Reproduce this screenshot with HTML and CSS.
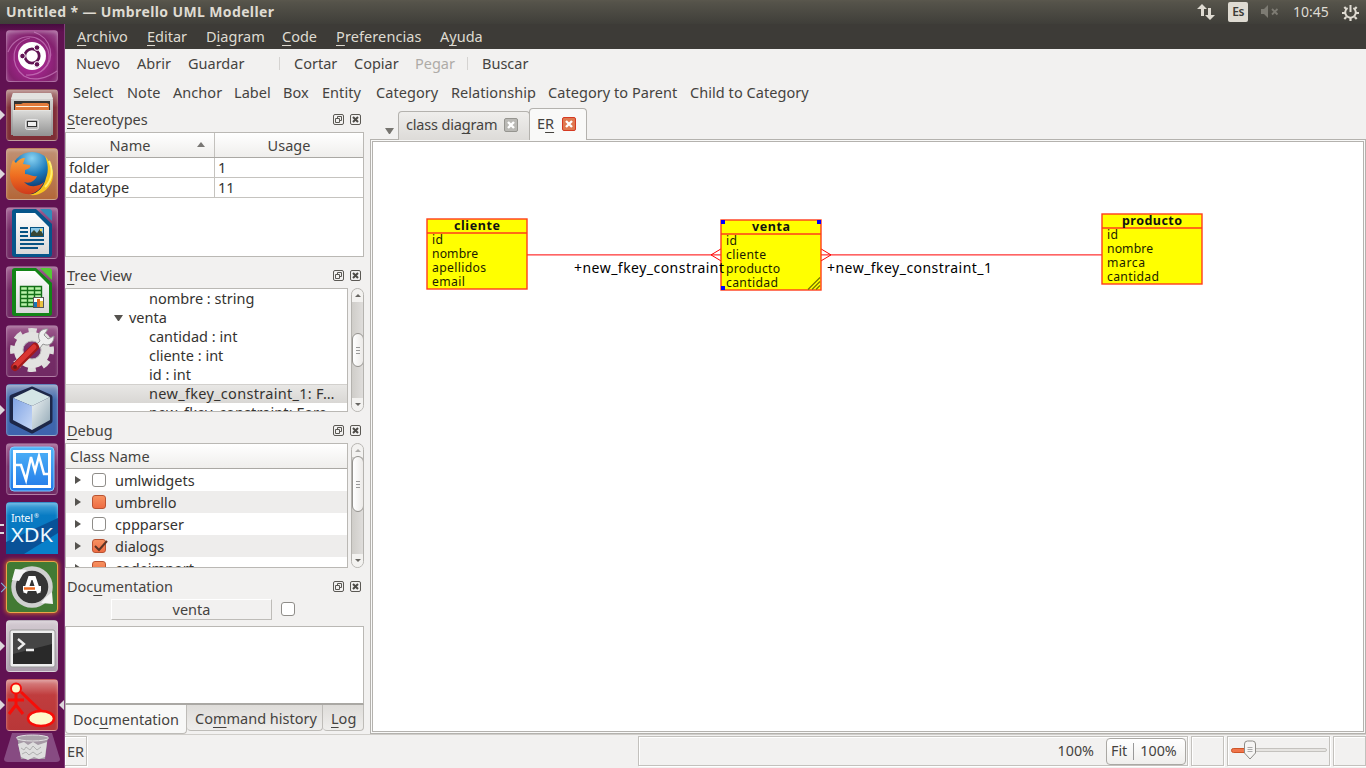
FILE: index.html
```html
<!DOCTYPE html>
<html lang="es">
<head>
<meta charset="utf-8">
<title>Untitled * — Umbrello UML Modeller</title>
<link rel="stylesheet" href="styles.css">
</head>
<body>
<svg class="defs" width="0" height="0">
  <defs>
    <linearGradient id="metal" x1="0" y1="0" x2="0" y2="1"><stop offset="0" stop-color="#dcdcda"/><stop offset="1" stop-color="#929292"/></linearGradient>
    <linearGradient id="page" x1="0" y1="0" x2="0" y2="1"><stop offset="0" stop-color="#fff"/><stop offset="1" stop-color="#d8d8d8"/></linearGradient>
    <radialGradient id="globe" cx=".5" cy=".15" r=".8"><stop offset="0" stop-color="#88d2f2"/><stop offset=".5" stop-color="#1b79ba"/><stop offset="1" stop-color="#0b2758"/></radialGradient>
    <linearGradient id="fox" x1="0" y1="0" x2="0" y2="1"><stop offset="0" stop-color="#f7a13c"/><stop offset=".5" stop-color="#ee6c20"/><stop offset="1" stop-color="#cf3b1b"/></linearGradient>
    <linearGradient id="vm" x1="0" y1="0" x2="0" y2="1"><stop offset="0" stop-color="#4fb4f8"/><stop offset="1" stop-color="#2178e8"/></linearGradient>
    <linearGradient id="cubeL" x1="0" y1="0" x2="1" y2="1"><stop offset="0" stop-color="#7fa3e4"/><stop offset="1" stop-color="#c9d9f6"/></linearGradient>
    <linearGradient id="cubeR" x1="0" y1="0" x2="1" y2="1"><stop offset="0" stop-color="#f0f4f4"/><stop offset="1" stop-color="#90a7b5"/></linearGradient>
    <symbol id="float" viewBox="0 0 11 11"><rect x=".5" y=".5" width="10" height="10" rx="1.5" fill="none" stroke="#5b5954"/><path d="M4.500 4.500V2.500h4v4h-2M2.500 4.500h4v4h-4z" fill="none" stroke="#5b5954"/></symbol>
    <symbol id="close" viewBox="0 0 11 11"><rect x=".5" y=".5" width="10" height="10" rx="1.5" fill="none" stroke="#5b5954"/><path d="M3 3l5 5M8 3L3 8" stroke="#4d4b47" stroke-width="2"/></symbol>
  </defs>
</svg>
<header class="panel">
  <span class="wintitle">Untitled * — Umbrello UML Modeller</span>
  <div class="tray">
    <svg width="18" height="18" viewBox="0 0 18 18" fill="#dfdbd2"><path d="M5 1l5 5H7v7H4V6H0zM11 5h3v7h4l-5 5-5-5h3z"/></svg>
    <span class="lang">Es</span>
    <svg width="18" height="14" viewBox="0 0 18 14" fill="#7d7b73"><path d="M0 4h3l4-4v13L3 9H0z"/><path d="M11 4l5.500 5.500M16.500 4L11 9.500" stroke="#7d7b73" stroke-width="1.800"/></svg>
    <span class="clock">10:45</span>
    <svg width="17" height="17" viewBox="0 0 17 17" fill="none" stroke="#dfdbd2"><path d="M5.600 4A5.300 5.300 0 1 0 11.400 4" stroke-width="2"/><path d="M8.500 1v7" stroke-width="2"/><path d="M8.500 14v3M0 9h3M14 9h3M2.300 3l2 2M14.700 3l-2 2M2.300 15l2-2M14.700 15l-2-2" stroke-width="2.200"/></svg>
  </div>
</header>
<div class="desktop">
  <nav class="launcher">
    <div class="tile dash"><svg viewBox="0 0 52 52"><g fill="none" stroke="#d58fcb" stroke-width="1.200" opacity=".6"><path d="M2 22C10 2 35 2 42 20c5 15-7 26-22 25"/><path d="M24 8C5 12 3 34 18 46c10 6 23 2 33-5"/><path d="M28 2c18 6 22 27 9 38"/></g><circle cx="26" cy="26" r="14" fill="#fff"/><circle cx="26" cy="26" r="7.200" fill="none" stroke="#611353" stroke-width="2.800"/><g fill="#611353" stroke="#fff" stroke-width="1"><circle cx="16.500" cy="26" r="2.800"/><circle cx="31" cy="17.600" r="2.800"/><circle cx="31" cy="34.400" r="2.800"/></g></svg></div>
    <div class="tile files run"><svg viewBox="0 0 52 52"><path d="M7 4h38l2 7v35H5V11z" fill="url(#metal)"/><path d="M5 10h42l-2-6H7z" fill="#e2e2e0"/><path d="M8 12h36v10H8z" fill="#343331"/><path d="M9 15h6l2-1h24l2 1v6H9z" fill="#e27b3b"/><path d="M10 17.500h32" stroke="#fff2df"/><path d="M7 21h38v26H7z" fill="url(#metal)"/><path d="M7 21.500h38" stroke="#e4e4e2"/><rect x="19.500" y="30.500" width="13" height="10" rx="2" fill="#bbb" stroke="#e6e6e6"/><rect x="21.500" y="32.500" width="9" height="5" fill="#efefef" stroke="#333"/></svg></div>
    <div class="tile firefox run"><svg viewBox="0 0 52 52"><circle cx="26" cy="25" r="21" fill="url(#globe)"/><path d="M39 8c7 7 10 17 7 25-4 10-13 15-22 14 8-2 14-8 16-17 3-7 2-15-1-22z" fill="#f8c51e"/><path d="M43 13c4 8 4 18-4 26" fill="none" stroke="#fff071" stroke-width="2"/><path d="M7 12l3 3c2-3 5-5 9-5l-2 6 7 1c1 2-1 4-5 5v4c4 0 7 3 12 2-2 5-7 8-13 6 5 6 15 5 20 0-4 9-11 13-18 12C11 45 4 37 4 27c0-6 1-10 3-15z" fill="url(#fox)"/></svg></div>
    <div class="tile plain"><svg viewBox="0 0 52 52"><path d="M9 2h21l16 15v30q0 3-3 3H9q-3 0-3-3V5q0-3 3-3z" fill="#06558a"/><path d="M34 2h9q3 0 3 3v9z" fill="#318cb9"/><path d="M10 6h19l14 14v27H10z" fill="url(#page)"/><path d="M14 21h8M14 25h8M14 29h8M14 33h24M14 37h24M14 41h18" stroke="#075383" stroke-width="2"/><rect x="24.500" y="20.500" width="13" height="9" fill="#8cc8e7" stroke="#075383"/><path d="M25 29v-3l3-3 3 3 3-4 3 5v2z" fill="#384735"/><circle cx="35" cy="23" r="1.200" fill="#f7d64f"/></svg></div>
    <div class="tile plain"><svg viewBox="0 0 52 52"><path d="M9 2h21l16 15v30q0 3-3 3H9q-3 0-3-3V5q0-3 3-3z" fill="#138417"/><path d="M34 2h9q3 0 3 3v9z" fill="#55c936"/><path d="M10 5h19l14 14v28H10z" fill="url(#page)"/><path d="M14 20h22v21H14z" fill="#b8f2a9"/><path d="M14.500 20.500h21v20h-21zM14 24.500h22M14 28.500h22M14 32.500h22M14 36.500h22M21.500 20v21M28.500 20v21" stroke="#146f18" fill="none" stroke-width="1.400"/><rect x="27.500" y="31.500" width="10" height="10" fill="#fff" stroke="#555"/><path d="M28 36h3v5h-3z" fill="#1876b8"/><path d="M31 33h3v8h-3z" fill="#e06b1e"/><path d="M34 35h3v6h-3z" fill="#e8c341"/></svg></div>
    <div class="tile plain"><svg viewBox="0 0 52 52"><circle cx="26" cy="25" r="19" fill="none" stroke="#dededc" stroke-width="6" stroke-dasharray="8 6.920" stroke-dashoffset="4"/><circle cx="26" cy="25" r="13.500" fill="none" stroke="#e2e2e0" stroke-width="9"/><circle cx="26" cy="25" r="9" fill="none" stroke="#b5b1b4"/><path d="M30 20l4-4c-4-7 1-13 8-12l-4 6 4 4 6-3c0 7-5 11-11 8l-3 4z" fill="#eee" stroke="#969696"/><path d="M9 42L29 22" stroke="#a4191a" stroke-width="8" stroke-linecap="round"/><path d="M9 41L28 22" stroke="#d93632" stroke-width="5" stroke-linecap="round"/><circle cx="9" cy="42" r="2" fill="#681616"/></svg></div>
    <div class="tile cube run"><svg viewBox="0 0 52 52"><path d="M26 5l18 8v24L26 47 6 37V13z" fill="#1d2748" stroke="#1d2748" stroke-width="5" stroke-linejoin="round"/><path d="M26 5l18 8-18 9L7 14z" fill="#d4e5e6"/><path d="M7 14l19 8v24L7 36z" fill="url(#cubeL)"/><path d="M44 13l-18 9v24l18-10z" fill="url(#cubeR)"/></svg></div>
    <div class="tile plain"><svg viewBox="0 0 52 52"><rect x="4" y="4" width="44" height="44" rx="4" fill="url(#vm)" stroke="#81cbff"/><rect x="8.500" y="8.500" width="35" height="35" fill="none" stroke="#fff" stroke-width="3"/><path d="M10 22h5l5 15 5-23 4 14 4-15 5 18h4" fill="none" stroke="#fff" stroke-width="2.500"/></svg></div>
    <div class="tile xdk run2"><svg viewBox="0 0 52 52"><path d="M0 40L52 16v36H0z" fill="#095298"/><path d="M18 52L52 31v21z" fill="#0880ca"/><text x="5" y="20" font-size="11" textLength="22">Intel</text><text x="28" y="16" font-size="6">®</text><text x="5" y="40" font-size="20" textLength="42" lengthAdjust="spacingAndGlyphs">XDK</text></svg></div>
    <div class="tile updater run hollow"><svg viewBox="0 0 52 52"><circle cx="26" cy="26" r="17" fill="#353535"/><circle cx="26" cy="26" r="18.500" fill="none" stroke="#d0d0d0" stroke-width="4.500"/><path d="M6 19l3-11 12 1-4 4-4 7zM46 31l1 12-12-1 4-5z" fill="#f4f4f4"/><path d="M19 32l5-15h4l5 15" fill="none" stroke="#fff" stroke-width="4"/><path d="M17 25h18v5H17z" fill="#fff"/><path d="M18 27.500h11" stroke="#ed6920" stroke-width="2.500"/></svg></div>
    <div class="tile term run"><svg viewBox="0 0 52 52"><rect x="4" y="10" width="45" height="37" rx="2" fill="#eee" stroke="#999"/><rect x="7" y="13" width="39" height="31" fill="#292929"/><path d="M7 13h39v11L7 34z" fill="#454545"/><path d="M12 19l6 5-6 5M20 30h8" fill="none" stroke="#eee" stroke-width="2.300"/></svg></div>
    <div class="tile umbrello run focus"><svg viewBox="0 0 52 52"><path d="M10 12v15M2 21h16M10 26L3 35M10 26l7 9M15 13l21 20" stroke="#f80d07" stroke-width="3" fill="none"/><circle cx="10" cy="9.500" r="5" fill="#fff8c9" stroke="#f80d07" stroke-width="2"/><ellipse cx="35" cy="39.500" rx="13" ry="7.500" fill="#fff8c9" stroke="#f80d07" stroke-width="2.500"/></svg></div>
    <svg class="trash" width="56" height="30" viewBox="0 0 56 30"><path d="M8 0h40l8 26q0 3-4 3H4q-4 0-4-3z" fill="#874b82"/><path d="M13 3h31l-3 23H17z" fill="#a69aa6"/><path d="M14 11l6-2 4 3 5-3 5 3 9-3-2 15-6 2-5-2-6 3-7-3z" fill="#dedede"/><path d="M17 15l3 2 2-3 4 3 3-4 4 4 4-3M18 21l4-2 3 3 4-3 4 3 5-3" fill="none" stroke="#b0b0b0"/><ellipse cx="28.500" cy="5" rx="16" ry="3" fill="#aaa2aa" stroke="#e2e0e2"/></svg>
  </nav>
  <main class="window">
    <div class="menubar"><span><u>A</u>rchivo</span><span><u>E</u>ditar</span><span>D<u>i</u>agram</span><span><u>C</u>ode</span><span class="loose"><u>P</u>referencias</span><span>A<u>y</u>uda</span></div>
    <div class="toolbar main-tools"><span>Nuevo</span><span>Abrir</span><span>Guardar</span><i></i><span>Cortar</span><span>Copiar</span><span class="off">Pegar</span><i></i><span>Buscar</span></div>
    <div class="toolbar shape-tools"><span>Select</span><span>Note</span><span>Anchor</span><span>Label</span><span>Box</span><span>Entity</span><span>Category</span><span>Relationship</span><span>Category to Parent</span><span>Child to Category</span></div>
    <div class="workspace">
      <aside class="docks">
        <section class="dock">
          <h2><span><u>S</u>tereotypes</span><svg><use href="#float"/></svg><svg><use href="#close"/></svg></h2>
          <div class="box table">
            <div class="thead"><span>Name<b class="sort"></b></span><span>Usage</span></div>
            <div class="trow"><span>folder</span><span>1</span></div>
            <div class="trow"><span>datatype</span><span>11</span></div>
          </div>
        </section>
        <section class="dock">
          <h2><span><u>T</u>ree View</span><svg><use href="#float"/></svg><svg><use href="#close"/></svg></h2>
          <div class="scroller">
            <div class="box tree">
              <div>nombre : string</div><div class="parent"><b class="open"></b>venta</div><div>cantidad : int</div><div>cliente : int</div><div>id : int</div><div class="selected">new_fkey_constraint_1: F…</div><div class="long">new_fkey_constraint: Fore…</div>
            </div>
            <div class="scrollbar"><b class="up"></b><div class="thumb mid"></div><b class="down"></b></div>
          </div>
        </section>
        <section class="dock">
          <h2><span><u>D</u>ebug</span><svg><use href="#float"/></svg><svg><use href="#close"/></svg></h2>
          <div class="scroller">
            <div class="box classes">
              <div class="thead">Class Name</div>
              <div class="crow"><b class="arrow"></b><b class="check"></b>umlwidgets</div>
              <div class="crow"><b class="arrow"></b><b class="check part"></b>umbrello</div>
              <div class="crow"><b class="arrow"></b><b class="check"></b>cppparser</div>
              <div class="crow"><b class="arrow"></b><b class="check part"><svg width="17" height="15" viewBox="0 0 17 15"><path d="M3 7l4 4 8-9" fill="none" stroke="#5c3526" stroke-width="2"/></svg></b>dialogs</div>
              <div class="crow"><b class="arrow"></b><b class="check part"></b>codeimport</div>
            </div>
            <div class="scrollbar"><b class="up dim"></b><div class="thumb top"></div><b class="down"></b></div>
          </div>
        </section>
        <section class="dock">
          <h2><span>Doc<u>u</u>mentation</span><svg><use href="#float"/></svg><svg><use href="#close"/></svg></h2>
          <div class="docname"><span>venta</span><b class="check"></b></div>
          <div class="box doctext"></div>
          <div class="doctabs"><span class="active">Doc<u>u</u>mentation</span><span>Co<u>m</u>mand history</span><span><u>L</u>og</span></div>
        </section>
      </aside>
      <section class="editor">
        <div class="tabs"><b class="open"></b><div class="tab"><span>class dia<u>g</u>ram</span><svg width="14" height="14"><rect x=".5" y=".5" width="13" height="13" rx="1.500" fill="#bab9b5" stroke="#969590"/><path d="M4 4l6 6M10 4l-6 6" stroke="#fff" stroke-width="2.400"/></svg></div><div class="tab active"><span>E<u>R</u></span><svg width="14" height="14"><rect x=".5" y=".5" width="13" height="13" rx="1.500" fill="#df7950" stroke="#d53a22"/><path d="M4 4l6 6M10 4l-6 6" stroke="#fff" stroke-width="2.400"/></svg></div></div>
        <div class="canvas">
          <svg viewBox="373 142 990 589">
            <g class="edges"><path d="M527 254.900h194M711 254.900l10-6M711 254.900l10 6M821 254.900h281M831 254.900l-10-6M831 254.900l-10 6"/></g>
            <g class="entity"><rect x="427" y="219" width="100" height="70"/><path d="M427 233h100"/></g>
            <g class="entity"><rect x="721" y="220" width="100" height="70"/><path d="M721 234h100"/></g>
            <g class="entity"><rect x="1102" y="214" width="100" height="70"/><path d="M1102 228h100"/></g>
            <g class="label"><text x="574" y="273" textLength="150">+new_fkey_constraint</text><text x="827" y="273" textLength="165">+new_fkey_constraint_1</text></g>
            <g class="name"><text x="454" y="230" textLength="46">cliente</text><text x="752" y="231" textLength="38">venta</text><text x="1122" y="225" textLength="60">producto</text></g>
            <g class="field">
              <text x="432" y="244" textLength="11">id</text><text x="432" y="258" textLength="46">nombre</text><text x="432" y="272" textLength="54">apellidos</text><text x="432" y="286" textLength="33">email</text>
              <text x="726" y="245" textLength="11">id</text><text x="726" y="259" textLength="40">cliente</text><text x="726" y="273" textLength="54">producto</text><text x="726" y="287" textLength="52">cantidad</text>
              <text x="1107" y="239" textLength="11">id</text><text x="1107" y="253" textLength="46">nombre</text><text x="1107" y="267" textLength="38">marca</text><text x="1107" y="281" textLength="52">cantidad</text>
            </g>
            <path d="M721 220h4v4h-4zM817 220h4v4h-4zM721 286h4v4h-4z" fill="#00f"/>
            <path d="M808 289.500l12-12M812 289.500l8-8M816 289.500l4-4" stroke="#777600" stroke-width="1.200"/>
          </svg>
        </div>
      </section>
    </div>
    <footer class="status">
      <span class="cell first">ER</span>
      <div class="cell zoom"><span>100%</span><div class="fit"><span>Fit</span><i></i><span>100%</span></div></div>
      <div class="cell"></div>
      <div class="cell"><svg width="96" height="22" viewBox="0 0 96 22"><rect x=".5" y="8.500" width="95" height="3" rx="1.500" fill="#e6e4e1" stroke="#c4c2be"/><rect x=".5" y="8.500" width="20" height="4" rx="2" fill="#f0744a" stroke="#cf5528"/><path d="M13.500 4q0-3 3-3h5q3 0 3 3v9l-5.500 6-5.500-6z" fill="#f6f5f4" stroke="#8e8c88"/><path d="M16.500 7.500h5M16.500 9.500h5M16.500 11.500h5" stroke="#aaa"/></svg></div>
      <div class="cell"></div>
    </footer>
  </main>
</div>
</body>
</html>
```
FILE: styles.css
```css
* { box-sizing: border-box; }
body { margin: 0; width: 1366px; height: 768px; overflow: hidden; background: #f2f1f0; color: #45433f; font: 14.5px/20px "Noto Sans", sans-serif; white-space: nowrap; }
b, i, h2 { font-weight: normal; font-style: normal; }
u { text-underline-offset: 3px; text-decoration-thickness: 1px; text-decoration-skip-ink: none; }
svg { display: block; flex: none; }
.defs { position: absolute; }

/* top panel */
.panel { height: 24px; display: flex; justify-content: space-between; padding: 0 7px 0 6px; background: linear-gradient(#5a574d, #55534a 10%, #3f3e39); color: #dfdbd2; }
.wintitle { font-weight: 700; font-size: 14px; line-height: 23px; letter-spacing: .38px; }
.tray { display: grid; grid-template-columns: 31px 33px 32px 49px 17px; align-items: center; }
.lang { width: 20px; height: 20px; border-radius: 2px; background: #dfdbd2; color: #3c3b37; font: 600 12px/20px "Noto Sans", sans-serif; text-align: center; letter-spacing: -.5px; }
.clock { font-size: 14px; }

/* launcher */
.desktop { display: flex; height: 744px; }
.launcher { width: 65px; padding: 6px 6px 0; background: linear-gradient(#470b3f, #611252 8px, #611252); border-right: 1px solid #83407b; display: flex; flex-direction: column; gap: 7px; }
.tile { position: relative; width: 52px; height: 52px; flex: none; border-radius: 4px; border: 1px solid rgba(255,255,255,.2); box-shadow: inset 0 2px 3px rgba(255,255,255,.2); }
.tile > svg { width: 52px; height: 52px; margin: -1px; }
.dash { background: radial-gradient(circle at 50% 60%, #b92aa2, #84216f 65%, #a25b96); }
.files { background: linear-gradient(#b38886, #812e38 35%, #7e2e35); }
.firefox { background: linear-gradient(#c09174, #b36739); }
.plain { background: linear-gradient(#a05f91, #762c67 45%, #712a64); }
.cube { background: linear-gradient(#8c9cc1, #426bad 30%, #3e64ad); }
.xdk { background: linear-gradient(#4ea8dc, #087bc3 25%, #0873bd); }
.xdk text { fill: #eef9ff; font-family: "Noto Sans", sans-serif; }
.updater { background: #427a34; border-color: #eda449; box-shadow: 0 0 4px 1px #c4602c; }
.term { background: linear-gradient(#d4cbd2, #aa9dab); }
.umbrello { background: linear-gradient(#d98a8a, #c03d3e 30%, #b83738); }
.run::before, .focus::after { content: ""; position: absolute; top: 20px; left: -7px; border: 5px solid transparent; border-left-color: #ddd7dc; border-right: 0; }
.run2::before { content: ""; position: absolute; top: 21px; left: -7px; width: 4px; height: 6px; border: solid #ddd7dc; border-width: 2px 0; }
.hollow::before { border: solid #80b7df; border-width: 1px 1px 0 0; width: 6px; height: 6px; transform: rotate(45deg); left: -9px; top: 22px; }
.focus::after { left: 52px; border: 5px solid transparent; border-right-color: #ddd7dc; border-left: 0; }
.trash { margin: -5px 0 0 -2px; }

/* menus and toolbars */
.window { flex: 1; display: flex; flex-direction: column; min-width: 0; }
.menubar { height: 25px; background: #3d3b37; color: #dfdbd2; display: grid; grid-template-columns: 70px 59px 76px 54px 104px auto; padding: 1px 0 0 12px; line-height: 22px; }
.loose { letter-spacing: .1px; }
.toolbar { display: grid; line-height: 29px; height: 29px; }
.main-tools { grid-template-columns: 61px 51px 91px 15px 60px 61px 52px 15px auto; padding-left: 11px; align-items: center; }
.main-tools i { width: 1px; height: 13px; background: #d5d3d1; }
.off { color: #aeaba7; }
.shape-tools { grid-template-columns: 54px 46px 61px 49px 39px 54px 75px 97px 142px auto; padding-left: 8px; letter-spacing: .05px; }
.workspace { height: 627px; display: flex; gap: 6px; }

/* docked panels */
.docks { width: 299px; }
.dock { margin-bottom: 6px; }
.dock h2 { margin: 0; height: 25px; padding: 0 3px 0 2px; display: flex; gap: 6px; align-items: center; font-size: inherit; }
.dock h2 span { flex: 1; padding-bottom: 2px; }
.dock h2 svg { width: 11px; height: 11px; }
.box { background: #fff; border: 1px solid #bab8b4; overflow: hidden; }
.table { height: 125px; }
.thead { height: 25px; line-height: 24px; background: linear-gradient(#fff, #efeeec); border-bottom: 1px solid #aaa8a4; }
.table .thead, .trow { display: grid; grid-template-columns: 149px 1fr; }
.table .thead { text-align: center; }
.table .thead span:first-child { padding-right: 20px; border-right: 1px solid #c3c1bd; position: relative; }
.sort { position: absolute; right: 9px; top: 9px; border: 4px solid transparent; border-bottom: 5px solid #797774; border-top: 0; }
.trow { height: 20px; line-height: 19px; border-bottom: 1px solid #c5c3bf; }
.trow span { padding-left: 3px; color: #353330; }
.trow span:first-child { border-right: 1px solid #c5c3bf; }
.scroller { display: flex; justify-content: space-between; }
.tree { width: 283px; height: 124px; color: #353330; }
.tree div { height: 19px; line-height: 19px; padding-left: 83px; }
.tree .parent { padding-left: 48px; display: flex; align-items: center; gap: 6px; }
.tree .selected { line-height: 17px; letter-spacing: .3px; background: linear-gradient(#e8e7e5, #d9d7d4); border-top: 1px solid #d2d0cd; }
.tree .long { letter-spacing: .1px; line-height: 18px; }
.open { border: 4px solid transparent; border-top: 6px solid #55534f; border-bottom: 0; width: 9px; height: 6px; }
.scrollbar { width: 13px; border: 1px solid #b5b3af; border-radius: 7px; background: linear-gradient(90deg, #cfcdc9, #dfdddb); display: flex; flex-direction: column; align-items: center; overflow: hidden; }
.scrollbar > b { width: 12px; height: 13px; background: #f3f2f0; display: flex; justify-content: center; align-items: center; flex: none; }
.scrollbar > b::before { content: ""; border: 3px solid transparent; }
.scrollbar > .up::before { border-bottom-color: #686662; border-top: 0; }
.scrollbar > .down::before { border-top-color: #686662; border-bottom: 0; }
.dim::before { opacity: .5; }
.down { margin-top: auto; }
.thumb { width: 12px; flex: none; border: 1px solid #94928e; border-radius: 6px; background: repeating-linear-gradient(#999 0 1px, transparent 1px 3px) center/4px 7px no-repeat, linear-gradient(90deg, #fff, #eceae8); }
.mid { height: 34px; margin-top: 31px; }
.top { height: 56px; margin-top: -1px; }
.classes { width: 283px; height: 125px; }
.classes .thead { padding-left: 4px; }
.crow { height: 22px; line-height: 22px; display: flex; align-items: center; padding-left: 9px; color: #353330; }
.crow:nth-child(odd) { background: #eeedec; }
.arrow { border: 4px solid transparent; border-left: 6px solid #55534f; border-right: 0; margin: -1px 11px 0 0; }
.check { width: 14px; height: 14px; border: 1px solid #8f8d89; border-radius: 3px; background: #fff; flex: none; }
.crow .check { margin: -1px 9px 0 0; }
.part { background: linear-gradient(#f7915f, #ee6c43); border-color: #b95332; }
.check svg { margin: -1px 0 0 -1px; }
.docname { display: flex; height: 27px; padding-left: 46px; gap: 9px; }
.docname span { width: 161px; height: 21px; border: 1px solid; border-color: #fff #bebcb8 #bebcb8 #fff; text-align: center; line-height: 18px; }
.docname .check { margin-top: 3px; }
.doctext { height: 79px; border-bottom-width: 2px; border-bottom-color: #aaa8a4; }
.doctabs { display: flex; align-items: flex-start; }
.doctabs span { height: 26px; line-height: 27px; padding-left: 8px; width: 136px; border: 1px solid #bebcb8; border-top: 0; border-left: 0; border-radius: 0 0 4px 4px; background: linear-gradient(#dedcd9, #efeeec); }
.doctabs .active { width: 122px; height: 29px; line-height: 29px; background: #f8f8f7; border-left: 1px solid #bebcb8; padding-left: 7px; }
.doctabs span:last-child { width: 41px; }

/* diagram editor */
.editor { flex: 1; min-width: 0; }
.tabs { height: 33px; margin-bottom: -1px; padding-left: 15px; display: flex; align-items: flex-end; position: relative; }
.tabs > .open { margin: 0 4px 6px 0; border-top-color: #777570; }
.tab { height: 29px; width: 132px; border: 1px solid #b4b2ae; border-bottom: 0; border-radius: 4px 4px 0 0; padding: 0 0 3px 7px; background: linear-gradient(#efeeec, #dddbd8); display: flex; align-items: center; letter-spacing: -.18px; }
.tab span { padding-bottom: 1px; }
.tab svg { margin: 1px 0 0 7px; }
.tab.active { width: 58px; height: 32px; margin: 0 0 0 -1px; background: #f9f9f8; padding-bottom: 1px; letter-spacing: 0; }
.tab.active span { padding-bottom: 2px; }
.tab.active svg { margin: 0 0 0 8px; }
.canvas { border: 1px solid #b4b2ae; padding: 1px; height: 595px; background: #f9f9f8; }
.canvas svg { width: 992px; height: 591px; border: 1px solid #b4b2ae; background: #fff; }
.edges path { stroke: #ff0000; fill: none; stroke-width: 1; }
.entity { fill: #ffff00; stroke: #ff3c1c; stroke-width: 1.4; }
.label text { font: 14px "Noto Sans", sans-serif; fill: #000; }
.name text { font: 700 12.5px "Noto Sans", sans-serif; fill: #111; }
.field text { font: 12.2px "Noto Sans", sans-serif; fill: #1c1c00; }

/* status bar */
.status { flex: 1; border-top: 1px solid #d0ceca; display: grid; grid-template-columns: 570px 550px 33px 103px 33px; gap: 3px; padding-top: 1px; line-height: 28px; }
.cell { height: 30px; border: 1px solid #c3c1bd; box-shadow: 1px 1px #fff, inset 1px 1px #fff; display: flex; align-items: center; }
.cell > svg { margin-left: 3px; }
.first { width: 22px; padding-left: 2px; border-left: 0; letter-spacing: -.1px; }
.zoom { padding-right: 1px; justify-content: flex-end; gap: 12px; font-size: 14.3px; }
.fit { height: 27px; width: 80px; border: 1px solid #aaa8a4; border-radius: 4px; display: flex; align-items: center; background: linear-gradient(#fff, #efeeec); padding-left: 4px; gap: 6px; }
.fit i { width: 1px; height: 17px; background: #999; }
```
